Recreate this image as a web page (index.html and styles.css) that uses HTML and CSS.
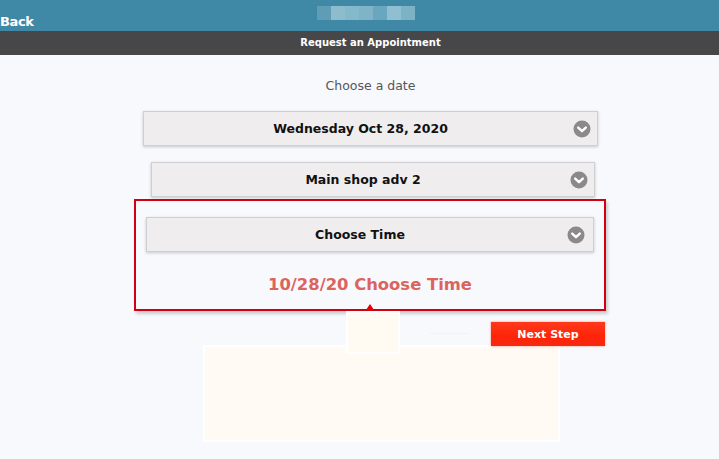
FILE: index.html
```html
<!DOCTYPE html>
<html lang="en">
<head>
  <meta charset="UTF-8">
  <meta name="viewport" content="width=device-width, initial-scale=1.0">
  <title>Request an Appointment</title>
  <link rel="stylesheet" href="styles.css">
</head>
<body>
  <!-- Barra superior -->
  <div class="topbar">
    <span class="back">Back</span>
    <span class="blur"><i></i><i></i><i></i><i></i><i></i><i></i><i></i></span>
  </div>
  <div class="titlebar">Request an Appointment</div>

  <div class="content">
    <p class="label">Choose a date</p>

    <div class="select select-date">
      <span>Wednesday Oct 28, 2020</span>
      <svg class="chevron" viewBox="0 0 18 18"><circle cx="9" cy="9" r="8.5" fill="#8a8a8a"/><path d="M5.2 7.6 L9 11.2 L12.8 7.6" stroke="#fff" stroke-width="2.4" fill="none" stroke-linecap="round" stroke-linejoin="round"/></svg>
    </div>

    <div class="select select-shop">
      <span>Main shop adv 2</span>
      <svg class="chevron" viewBox="0 0 18 18"><circle cx="9" cy="9" r="8.5" fill="#8a8a8a"/><path d="M5.2 7.6 L9 11.2 L12.8 7.6" stroke="#fff" stroke-width="2.4" fill="none" stroke-linecap="round" stroke-linejoin="round"/></svg>
    </div>

    <!-- Caixa destacada -->
    <div class="highlight">
      <div class="select select-time">
        <span>Choose Time</span>
        <svg class="chevron" viewBox="0 0 18 18"><circle cx="9" cy="9" r="8.5" fill="#8a8a8a"/><path d="M5.2 7.6 L9 11.2 L12.8 7.6" stroke="#fff" stroke-width="2.4" fill="none" stroke-linecap="round" stroke-linejoin="round"/></svg>
      </div>
      <p class="chosen">10/28/20 Choose Time</p>
    </div>

    <div class="lower">
      <div class="tip-box"></div>
      <span class="faint"></span>
      <button class="next-btn">Next Step</button>
    </div>
    <div class="panel"></div>
  </div>
</body>
</html>
```

FILE: styles.css
```css
body {
  font-family: "DejaVu Sans", Verdana, sans-serif;
  margin: 0;
  padding: 0;
  background-color: #f8f9fd;
  width: 719px;
  height: 459px;
  overflow: hidden;
}

.topbar {
  height: 31px;
  background-color: #3f89a7;
  display: flex;
  align-items: flex-end;
}

.back {
  color: #fff;
  font-weight: bold;
  font-size: 13px;
  letter-spacing: -0.4px;
  padding-bottom: 2px;
}

.blur {
  display: flex;
  margin-left: 284px;
  margin-bottom: 11px;
  height: 14px;
}

.blur i {
  display: block;
  width: 14px;
  height: 14px;
}

.blur i:nth-child(1) { background: #5f9db5; }
.blur i:nth-child(2) { background: #8dbccd; }
.blur i:nth-child(3) { background: #84b9cc; }
.blur i:nth-child(4) { background: #7fb3c7; }
.blur i:nth-child(5) { background: #69a7bf; }
.blur i:nth-child(6) { background: #8fbfd0; }
.blur i:nth-child(7) { background: #7cb1c6; }

.titlebar {
  height: 24px;
  line-height: 24px;
  background-color: #474649;
  color: #fff;
  font-weight: bold;
  font-size: 10px;
  text-align: center;
  padding-left: 22px;
}

.content {
  padding-top: 23px;
}

.label {
  margin: 0;
  height: 16px;
  line-height: 16px;
  font-size: 12.5px;
  color: #555;
  text-align: center;
  padding-left: 22px;
}

.select {
  box-sizing: border-box;
  height: 35px;
  padding-right: 20px;
  background-color: #efedee;
  border: 1px solid #cfcfd1;
  box-shadow: 0 1px 3px rgba(0, 0, 0, 0.2);
  display: flex;
  align-items: center;
  justify-content: center;
  position: relative;
  font-weight: bold;
  font-size: 12.5px;
  color: #111;
}

.chevron {
  width: 18px;
  height: 18px;
  position: absolute;
  top: 8px;
  right: 6px;
}

.select-date {
  margin: 17px 0 0 143px;
  width: 455px;
}

.select-shop {
  margin: 16px 0 0 151px;
  width: 444px;
}

.select-time {
  margin: 16px 0 0 10px;
  width: 448px;
}

.select-time .chevron {
  right: 8px;
}

.highlight {
  box-sizing: border-box;
  margin: 2px 0 0 134px;
  width: 472px;
  height: 112px;
  border: 2px solid #d0000f;
  box-shadow: 2px 3px 3px rgba(0, 0, 0, 0.18);
  position: relative;
}

.highlight::after {
  content: "";
  position: absolute;
  left: 230px;
  bottom: -1px;
  border-left: 4px solid transparent;
  border-right: 4px solid transparent;
  border-bottom: 6px solid #e30000;
}

.chosen {
  margin: 23px 0 0;
  text-align: center;
  font-size: 16.4px;
  font-weight: bold;
  color: #db645d;
}

.lower {
  display: flex;
  align-items: flex-start;
  height: 34px;
}

.tip-box {
  box-sizing: border-box;
  margin-left: 346px;
  width: 54px;
  height: 43px;
  background-color: #fffaf2;
  border: 2px solid #fff;
  position: relative;
  z-index: 1;
}

.faint {
  margin: 22px 0 0 30px;
  width: 40px;
  height: 1px;
  background-color: #f1f2f6;
}

.next-btn {
  margin: 11px 0 0 21px;
  width: 114px;
  height: 24px;
  border: none;
  padding: 0;
  background: linear-gradient(#ff3a1c, #ff2408 60%, #f52a10);
  box-shadow: 0 0 2px rgba(255, 60, 30, 0.6);
  color: #fff;
  font-family: "DejaVu Sans", Verdana, sans-serif;
  font-weight: bold;
  font-size: 11px;
}

.panel {
  box-sizing: border-box;
  margin-left: 203px;
  width: 357px;
  height: 97px;
  background-color: #fffaf3;
  border: 2px solid #fff;
}
```
